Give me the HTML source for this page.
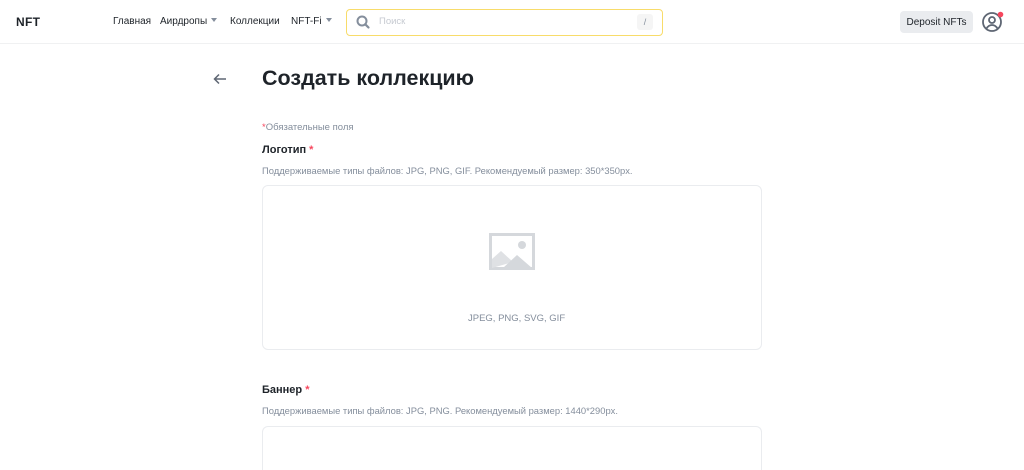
<!DOCTYPE html>
<html><head><meta charset="utf-8"><style>
*{margin:0;padding:0;box-sizing:border-box}
html,body{width:1024px;height:470px;overflow:hidden}
body{background:#fff;font-family:"Liberation Sans",sans-serif;color:#1e2329;position:relative}
.a{position:absolute;white-space:nowrap}
.hdr{position:absolute;left:0;top:0;width:1024px;height:44px;border-bottom:1px solid #f0f1f2}
.nav{font-size:10px;color:#1e2329;top:16px}
.tri{display:inline-block;width:0;height:0;border-left:3px solid transparent;border-right:3px solid transparent;border-top:4px solid #848e9c;margin-left:4px;vertical-align:2px}
.gray{color:#848e9c;font-size:9.4px}
.lbl{font-size:11px;font-weight:bold}
.star{color:#f6465d}
.box{position:absolute;left:262px;width:500px;border:1px solid #eaecef;border-radius:6px}
</style></head><body>
<div class="hdr"></div>
<div class="a" style="left:16px;top:15px;font-size:12px;font-weight:bold;letter-spacing:.3px">NFT</div>
<div class="a nav" style="left:113px">Главная</div>
<div class="a nav" style="left:160px">Аирдропы<span class="tri"></span></div>
<div class="a nav" style="left:230px">Коллекции</div>
<div class="a nav" style="left:291px">NFT-Fi<span class="tri"></span></div>
<div class="a" style="left:346px;top:9px;width:317px;height:27px;border:1.5px solid #f8dc6a;border-radius:4px"></div>
<svg class="a" style="left:355px;top:14px" width="16" height="16" viewBox="0 0 16 16"><circle cx="7" cy="7" r="4.5" fill="none" stroke="#848e9c" stroke-width="2"/><path d="M10.3 10.3L13.5 13.5" stroke="#848e9c" stroke-width="2.2" stroke-linecap="round"/></svg>
<div class="a" style="left:379px;top:16px;font-size:9.5px;color:#c6cad1">Поиск</div>
<div class="a" style="left:637px;top:14px;width:16px;height:16px;background:#f5f5f5;border-radius:3px;font-size:9px;color:#848e9c;text-align:center;line-height:16px">/</div>
<div class="a" style="left:900px;top:11px;width:73px;height:22px;background:#eaecef;border-radius:4px;font-size:10px;display:flex;align-items:center;justify-content:center">Deposit NFTs</div>
<svg class="a" style="left:980px;top:9px" width="26" height="26" viewBox="0 0 26 26"><circle cx="12" cy="13" r="9" fill="none" stroke="#5e6673" stroke-width="1.8"/><circle cx="12" cy="11" r="3" fill="none" stroke="#5e6673" stroke-width="1.8"/><path d="M6.5 19.5c1.5-2.5 3.5-3.5 5.5-3.5s4 1 5.5 3.5" fill="none" stroke="#5e6673" stroke-width="1.8"/><circle cx="20.5" cy="5.5" r="2.8" fill="#f6465d"/></svg>
<svg class="a" style="left:212px;top:72px" width="16" height="14" viewBox="0 0 16 14"><path d="M14 7H2.5M7 2.5L2.5 7 7 11.5" fill="none" stroke="#5e6673" stroke-width="1.5"/></svg>
<div class="a" style="left:262px;top:66px;font-size:21.5px;font-weight:bold">Создать коллекцию</div>
<div class="a gray" style="left:262px;top:122px;font-size:9.5px"><span class="star">*</span>Обязательные поля</div>
<div class="a lbl" style="left:262px;top:144px">Логотип <span class="star">*</span></div>
<div class="a gray" style="left:262px;top:165px">Поддерживаемые типы файлов: JPG, PNG, GIF. Рекомендуемый размер: 350*350px.</div>
<div class="box" style="top:185px;height:165px"></div>
<svg class="a" style="left:489px;top:233px" width="48" height="38" viewBox="0 0 48 38"><rect x="1.5" y="1.5" width="43" height="34" fill="none" stroke="#d5d8dc" stroke-width="3"/><path d="M3 35V26l9-8 12 11z" fill="#dfe1e4"/><path d="M14 35l14-13 15 13z" fill="#d5d8dc"/><circle cx="33" cy="12" r="4" fill="#d5d8dc"/></svg>
<div class="a gray" style="left:468px;top:313px;font-size:9.5px">JPEG, PNG, SVG, GIF</div>
<div class="a lbl" style="left:262px;top:384px">Баннер <span class="star">*</span></div>
<div class="a gray" style="left:262px;top:405px">Поддерживаемые типы файлов: JPG, PNG. Рекомендуемый размер: 1440*290px.</div>
<div class="box" style="top:426px;height:44px;border-bottom:none;border-radius:6px 6px 0 0"></div>
</body></html>
